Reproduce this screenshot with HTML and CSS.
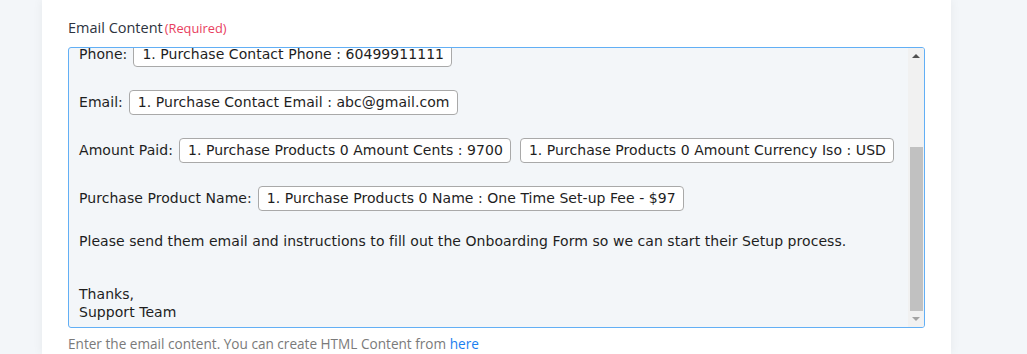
FILE: index.html
```html
<!DOCTYPE html>
<html>
<head>
<meta charset="utf-8">
<link rel="stylesheet" href="styles.css">
</head>
<body>
<div class="page">
  <div class="card">
    <div class="label">Email Content<span class="req">(Required)</span></div>
    <div class="editor">
      <div class="content">
        <div class="fields">
          <div class="row">Phone:<span class="chip">1. Purchase Contact Phone : 60499911111</span></div>
          <div class="row">Email:<span class="chip">1. Purchase Contact Email : abc@gmail.com</span></div>
          <div class="row">Amount Paid:<span class="chip">1. Purchase Products 0 Amount Cents : 9700</span><span class="chip">1. Purchase Products 0 Amount Currency Iso : USD</span></div>
          <div class="row">Purchase Product Name:<span class="chip">1. Purchase Products 0 Name : One Time Set-up Fee - $97</span></div>
        </div>
        <p class="para">Please send them email and instructions to fill out the Onboarding Form so we can start their Setup process.</p>
        <p class="sign">Thanks,<br>Support Team</p>
      </div>
      <div class="scrollbar">
        <div class="sb-btn"><span class="tri-up"></span></div>
        <div class="sb-track"><div class="sb-thumb"></div></div>
        <div class="sb-btn"><span class="tri-down"></span></div>
      </div>
    </div>
    <div class="help">Enter the email content. You can create HTML Content from <a class="link" href="#">here</a></div>
  </div>
</div>
</body>
</html>
```

FILE: styles.css
```css
html, body {
  margin: 0;
  padding: 0;
  background: #f3f6f9;
  height: 354px;
  overflow: hidden;
}
.page {
  display: flex;
  padding-left: 42px;
}
.card {
  width: 909px;
  height: 354px;
  background: #ffffff;
  box-shadow: 0 0 10px rgba(0, 0, 0, 0.06);
  box-sizing: border-box;
  padding: 18px 26px 0 26px;
}
.label {
  font-family: "Open Sans", "Liberation Sans", sans-serif;
  font-size: 14.5px;
  line-height: 20px;
  color: #2d3340;
  margin-bottom: 9px;
}
.req {
  color: #e8405e;
  font-size: 12.8px;
  margin-left: 2px;
}
.editor {
  width: 857px;
  height: 281px;
  box-sizing: border-box;
  border: 1px solid #62aff5;
  border-radius: 3px;
  background: #f3f6f9;
  display: flex;
  overflow: hidden;
}
.content {
  flex: 1;
  display: flex;
  flex-direction: column;
  justify-content: flex-end;
  overflow: hidden;
  padding: 0 10px 6px 10px;
  font-family: "DejaVu Sans", Verdana, sans-serif;
  font-size: 14px;
  letter-spacing: 0.05px;
  line-height: 18px;
  color: #1e1e1e;
}
.fields {
  display: flex;
  flex-direction: column;
  gap: 24px;
  flex-shrink: 0;
}
.row {
  display: flex;
  align-items: center;
  height: 24px;
  white-space: nowrap;
}
.chip {
  display: inline-flex;
  align-items: center;
  height: 25px;
  box-sizing: border-box;
  border: 1px solid #a9a9a9;
  border-radius: 4px;
  background: #ffffff;
  padding: 0 7px 0 8px;
  margin-left: 6px;
}
.chip + .chip {
  margin-left: 9px;
}
.para {
  margin: 22px 0 35px 0;
  flex-shrink: 0;
}
.sign {
  margin: 0;
  flex-shrink: 0;
}
.scrollbar {
  width: 16px;
  background: #f1f1f1;
  display: flex;
  flex-direction: column;
  flex-shrink: 0;
}
.sb-btn {
  height: 16px;
  display: flex;
  align-items: center;
  justify-content: center;
}
.tri-up {
  width: 0;
  height: 0;
  border-left: 4px solid transparent;
  border-right: 4px solid transparent;
  border-bottom: 4px solid #505050;
}
.tri-down {
  width: 0;
  height: 0;
  border-left: 4px solid transparent;
  border-right: 4px solid transparent;
  border-top: 4px solid #a3a3a3;
}
.sb-track {
  flex: 1;
  display: flex;
  flex-direction: column;
  justify-content: flex-end;
}
.sb-thumb {
  height: 164px;
  margin: 0 1px 0 2px;
  background: #c1c1c1;
}
.help {
  margin-top: 7px;
  font-family: "Open Sans", "Liberation Sans", sans-serif;
  font-size: 13.6px;
  line-height: 18px;
  color: #7a7a7a;
}
.link {
  color: #1a7ff0;
  text-decoration: none;
}
```
